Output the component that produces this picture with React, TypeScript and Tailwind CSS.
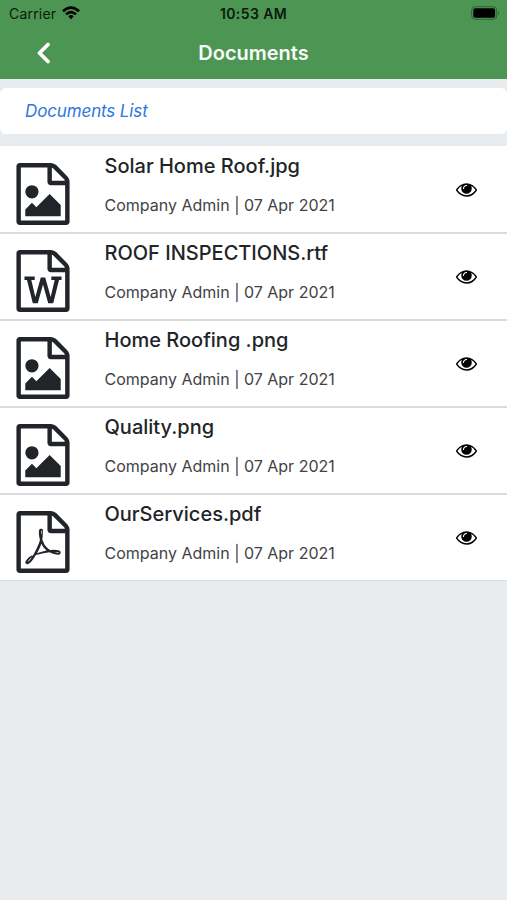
type DocType = 'image' | 'word' | 'pdf'

const documents: { name: string; type: DocType; info: string }[] = [
  { name: 'Solar Home Roof.jpg', type: 'image', info: 'Company Admin | 07 Apr 2021' },
  { name: 'ROOF INSPECTIONS.rtf', type: 'word', info: 'Company Admin | 07 Apr 2021' },
  { name: 'Home Roofing .png', type: 'image', info: 'Company Admin | 07 Apr 2021' },
  { name: 'Quality.png', type: 'image', info: 'Company Admin | 07 Apr 2021' },
  { name: 'OurServices.pdf', type: 'pdf', info: 'Company Admin | 07 Apr 2021' },
]

const page =
  'M1596 380q28 28 48 76t20 88v1152q0 40-28 68t-68 28h-1344q-40 0-68-28t-28-68v-1600q0-40 28-68t68-28h896q40 0 88 20t76 48zm-444-244v376h376q-10-29-22-41l-313-313q-12-12-41-22zm384 1528v-1024h-416q-40 0-68-28t-28-68v-416h-768v1536h1280z'

const glyphs: Record<DocType, string> = {
  image:
    'm-128-448v320h-1024v-192l192-192 128 128 384-384zm-832-192q-80 0-136-56t-56-136 56-136 136-56 136 56 56 136-56 136-136 56z',
  word:
    'M361 768v100h72l168 668h144l151-540 151 540h144l168-668h72v-100h-295v100h98l-116 490-158-560h-128l-158 560-116-490h98v-100z',
  pdf:
    'm-514-593q33 26 84 56 59-7 117-7 147 0 177 49 16 22 2 52 0 1-1 2l-2 2v1q-6 38-71 38-48 0-115-20t-130-53q-221 24-392 83-153 262-242 262-15 0-28-7l-24-12q-1-1-6-5-10-10-6-36 9-40 56-91.500t132-96.500q14-9 23 6 2 2 2 4 52-85 107-197 68-136 104-262-24-82-30.500-159.500t6.500-127.500q11-40 42-40h22q23 0 35 15 18 21 9 68-2 6-4 8 1 3 1 8v30q-2 123-14 192 55 164 146 238zm-576 411q52-24 137-158-51 40-87.500 84t-49.500 74zm398-920q-15 42-2 132 1-7 7-44 0-3 7-43 1-4 4-8-1-1-1-2-1-2-1-3-1-22-13-36 0 1-1 2v2zm-124 661q135-54 284-81-2-1-13-9.500t-16-13.500q-76-67-127-176-27 86-83 197-30 56-45 83zm646-16q-24-24-140-24 76 28 124 28 14 0 18-1 0-1-2-3z',
}

const FileIcon = ({ type }: { type: DocType }) => (
  <svg viewBox="116 0 1560 1792" className="w-[54px] h-[62px] shrink-0" fill="currentColor">
    <path d={page + glyphs[type]} />
  </svg>
)

const EyeIcon = () => (
  <svg viewBox="0 384 1792 1152" className="w-[21px] h-[14px]" fill="currentColor">
    <path d="M1664 960q-152-236-381-353 61 104 61 225 0 185-131.500 316.500t-316.500 131.500-316.500-131.500-131.500-316.500q0-121 61-225-229 117-381 353 133 205 333.500 326.500t434.500 121.500 434.500-121.500 333.500-326.500zm-720-384q0-20-14-34t-34-14q-125 0-214.500 89.500t-89.500 214.500q0 20 14 34t34 14 34-14 14-34q0-86 61-147t147-61q20 0 34-14t14-34zm848 384q0 34-20 69-140 230-376.500 368.500t-499.500 138.500-499.500-139-376.500-368q-20-35-20-69t20-69q140-229 376.500-368t499.500-139 499.500 139 376.500 368q20 35 20 69z" />
  </svg>
)

const StatusBar = () => (
  <div className="grid grid-cols-3 items-center h-[27px] pl-[9px] pr-[7px] text-[14px] text-[#0c190e]">
    <div className="flex items-center gap-[6px]">
      <span className="tracking-[0.2px]">Carrier</span>
      <svg viewBox="0 0 18 14" className="w-[18px] h-[14px] -mt-px" fill="none" stroke="#000" strokeWidth="2.6">
        <path d="M1 5.300Q9-2 17 5.300" />
        <path d="M4 8.300Q9 3.900 14 8.300" />
        <path d="M6.300 10.200Q9 7.900 11.700 10.200L9 13.200z" fill="#000" stroke="none" />
      </svg>
    </div>
    <span className="-ml-[2px] text-center font-semibold tracking-[0.4px]">10:53 AM</span>
    <svg viewBox="0 0 29 14" className="w-[29px] h-[14px] -mt-px justify-self-end">
      <rect x="0.700" y="0.700" width="25" height="12.600" rx="3.500" fill="none" stroke="#2f6236" />
      <rect x="2.300" y="2.300" width="21.800" height="9.400" rx="1.800" fill="#000" />
      <path d="M27 4.800q2 2.200 0 4.400z" fill="#2f6236" />
    </svg>
  </div>
)

const Header = () => (
  <header className="h-[79px] bg-[#4d9553]">
    <StatusBar />
    <div className="grid grid-cols-[80px_1fr_80px] items-center h-[51px]">
      <svg viewBox="0 0 14 22" className="w-[14px] h-[22px] ml-[37px]" fill="none" stroke="#fff" strokeWidth="3.800" strokeLinecap="round" strokeLinejoin="round">
        <path d="M11 2.500L2.500 11L11 19.500" />
      </svg>
      <h1 className="text-center text-[20px] font-semibold text-[#f7fbf7]">Documents</h1>
    </div>
  </header>
)

const App = () => {
  return (
    <div className="flex flex-col h-[900px] bg-[#e8ecef] font-['Inter',sans-serif]">
      <Header />
      <div className="flex items-center h-[46px] mt-[9px] pt-px pl-[25px] rounded-[6px] bg-white text-[17px] tracking-[-0.13px] italic text-[#2f76e0]">
        <span>Documents List</span>
      </div>
      <ul className="mt-3">
        {documents.map((doc) => (
          <li key={doc.name} className="flex items-start h-[87px] pl-4 pr-[30.5px] bg-white border-b-2 border-[#d9dbdd] text-[#212529] first:h-[88px] first:pt-px last:h-[86px] last:border-b">
            <div className="pt-4">
              <FileIcon type={doc.type} />
            </div>
            <div className="flex-1 ml-[34.5px] pt-[5px]">
              <h2 className="text-[20px] leading-7 font-medium whitespace-nowrap">{doc.name}</h2>
              <p className="mt-[13px] text-[16px] leading-6 text-[#3f4346] whitespace-nowrap">{doc.info}</p>
            </div>
            <div className="pt-9 text-black">
              <EyeIcon />
            </div>
          </li>
        ))}
      </ul>
    </div>
  )
}

export default App
